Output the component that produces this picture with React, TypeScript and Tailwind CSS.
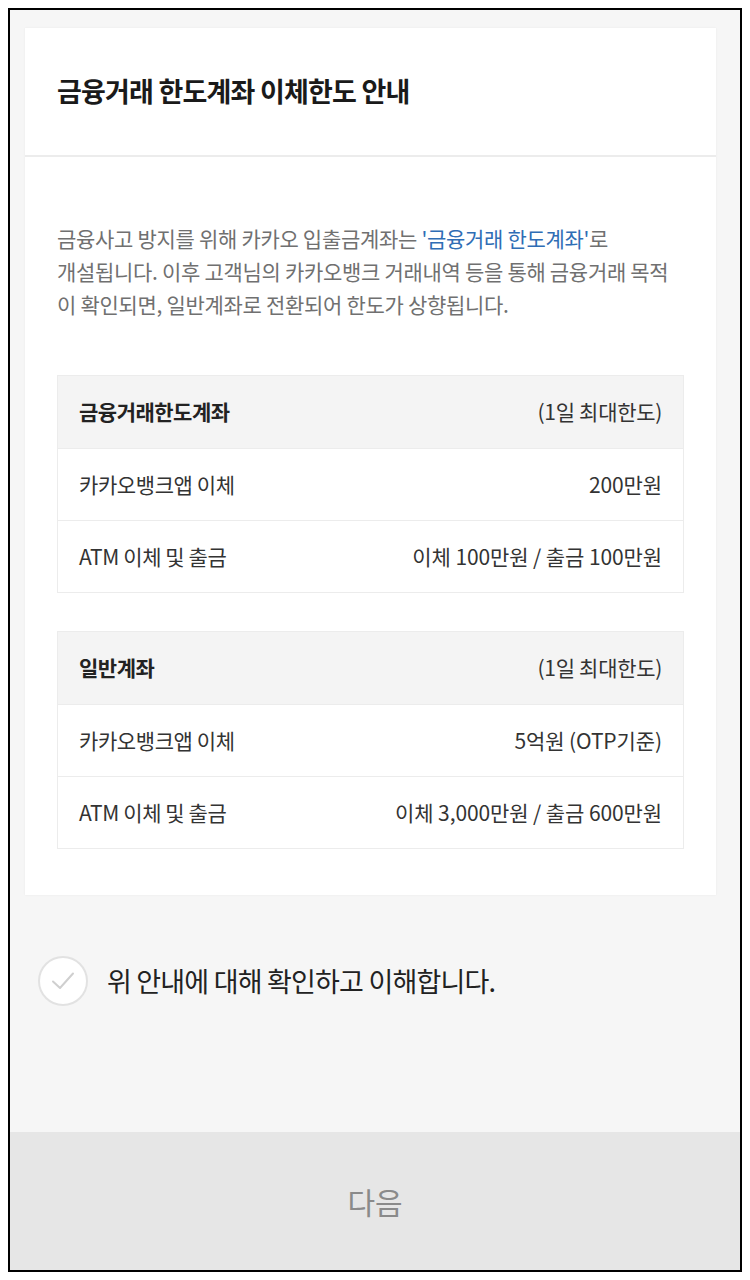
import React from 'react';

const font = { fontFamily: '"Noto Sans CJK KR", "Noto Sans", sans-serif' };

type Row = { label: string; value: string };

function LimitTable({ title, rows }: { title: string; rows: Row[] }) {
  return (
    <div className="border border-[#ececec]">
      <div className="flex h-[72px] items-center justify-between bg-[#f4f4f4] px-[21px]">
        <span className="text-[21px] font-bold text-[#222] tracking-[-0.5px]">{title}</span>
        <span className="text-[21px] text-[#333] tracking-[-0.3px]">(1일 최대한도)</span>
      </div>
      {rows.map((r) => (
        <div
          key={r.label}
          className="flex h-[72px] items-center justify-between border-t border-[#ececec] bg-white px-[21px]"
        >
          <span className="text-[21px] text-[#333] tracking-[-0.4px]">{r.label}</span>
          <span className="text-[21px] text-[#333] tracking-[-0.1px]">{r.value}</span>
        </div>
      ))}
    </div>
  );
}

export default function App() {
  return (
    <div className="h-[1280px] w-[750px] bg-white p-[8px]" style={font}>
      <div className="flex h-[1264px] flex-col border-2 border-black bg-[#f6f6f6]">
        <div className="flex-1 pl-[15px] pr-[24px] pt-[18px]">
          <div className="bg-white shadow-[0_0_2px_rgba(0,0,0,0.06)]">
            <div className="flex h-[129px] items-center border-b-2 border-[#ececec] px-[32px]">
              <h1 className="text-[27px] font-bold text-[#1a1a1a] tracking-[-0.8px]">
                금융거래 한도계좌 이체한도 안내
              </h1>
            </div>
            <div className="px-[32px] pt-[65px] pb-[46px]">
              <p className="text-[21px] leading-[33px] text-[#707070] tracking-[-0.3px]">
                금융사고 방지를 위해 카카오 입출금계좌는{' '}
                <span className="text-[#2f6db5]">'금융거래 한도계좌'</span>로
                <br />
                개설됩니다. 이후 고객님의 카카오뱅크 거래내역 등을 통해 금융거래 목적
                <br />
                이 확인되면, 일반계좌로 전환되어 한도가 상향됩니다.
              </p>
              <div className="mt-[54px] flex flex-col gap-[38px]">
                <LimitTable
                  title="금융거래한도계좌"
                  rows={[
                    { label: '카카오뱅크앱 이체', value: '200만원' },
                    { label: 'ATM 이체 및 출금', value: '이체 100만원 / 출금 100만원' },
                  ]}
                />
                <LimitTable
                  title="일반계좌"
                  rows={[
                    { label: '카카오뱅크앱 이체', value: '5억원 (OTP기준)' },
                    { label: 'ATM 이체 및 출금', value: '이체 3,000만원 / 출금 600만원' },
                  ]}
                />
              </div>
            </div>
          </div>
          <label className="mt-[61px] flex items-center gap-[19px] pl-[13px]">
            <span className="flex h-[50px] w-[50px] items-center justify-center rounded-full border-2 border-[#e2e2e2] bg-white">
              <svg width="24" height="20" viewBox="0 0 24 20" fill="none">
                <path d="M2 10.5 L9 17 L22 2.5" stroke="#cfcfcf" strokeWidth="2" strokeLinecap="round" strokeLinejoin="round" />
              </svg>
            </span>
            <span className="text-[27px] text-[#222] tracking-[-0.8px]">위 안내에 대해 확인하고 이해합니다.</span>
          </label>
        </div>
        <button className="flex h-[138px] w-full items-center justify-center bg-[#e6e6e6] text-[30px] text-[#8a8a8a]">
          다음
        </button>
      </div>
    </div>
  );
}
